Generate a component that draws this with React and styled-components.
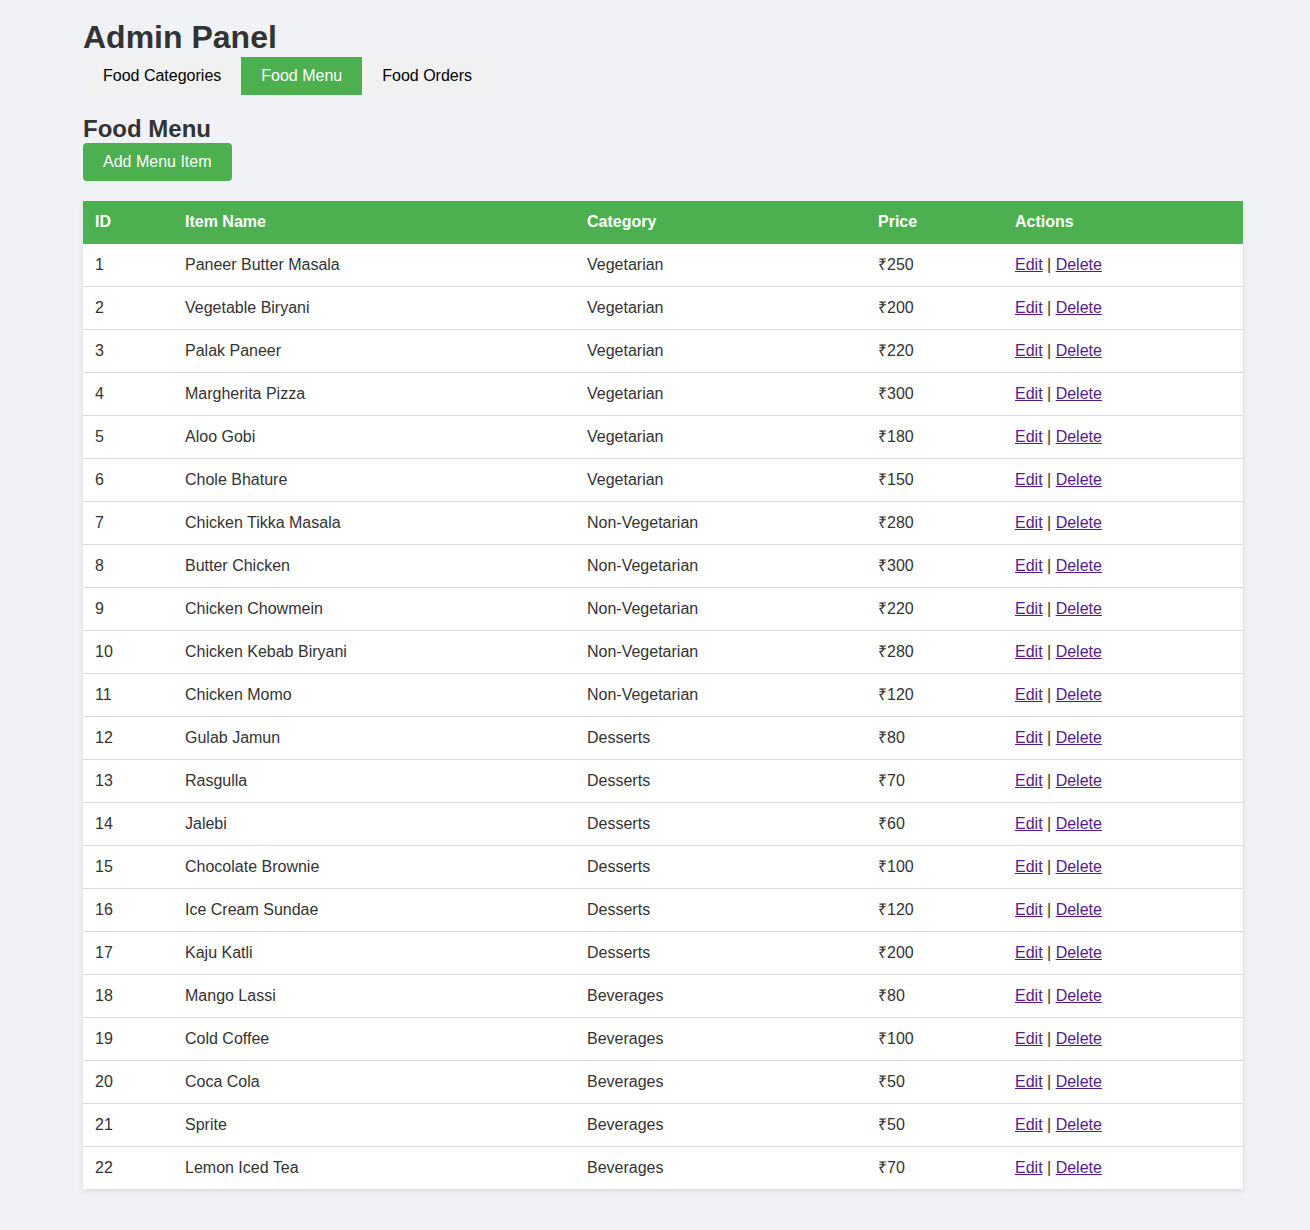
import React, { useState } from 'react'
import styled, { createGlobalStyle } from 'styled-components'

const GlobalStyle = createGlobalStyle`
  body {
    margin: 0;
    padding: 0 0 0 16px;
    background: #f0f2f5;
    font-family: "Liberation Sans", Arial, sans-serif;
    color: #333;
  }
`

const Page = styled.div`
  max-width: 1160px;
  margin: 0 auto;
  padding: 19px 0 40px;
`

const Title = styled.h1`
  margin: 0 0 1px;
  font-size: 32px;
  line-height: 37px;
  font-weight: 700;
  color: #333;
`

const Tabs = styled.nav`
  display: inline-flex;
  background: #f1f1f1;
`

const Tab = styled.button`
  border: none;
  margin: 0;
  padding: 10px 20px;
  font-family: inherit;
  font-size: 16px;
  line-height: 18px;
  cursor: pointer;
  background: ${p => (p.$active ? '#4caf50' : 'transparent')};
  color: ${p => (p.$active ? '#fff' : '#000')};
`

const SectionTitle = styled.h2`
  margin: 20px 0 1px;
  font-size: 24px;
  line-height: 27px;
  font-weight: 700;
  color: #333;
`

const AddButton = styled.button`
  border: none;
  border-radius: 4px;
  padding: 10px 20px;
  background: #4caf50;
  color: #fff;
  font-family: inherit;
  font-size: 16px;
  line-height: 18px;
  cursor: pointer;
`

const Table = styled.table`
  width: 100%;
  margin-top: 20px;
  border-collapse: collapse;
  table-layout: fixed;
  background: #fff;
  box-shadow: 0 2px 5px rgba(0, 0, 0, 0.1);
  font-size: 16px;
  line-height: 18px;
`

const Th = styled.th`
  background: #4caf50;
  color: #fff;
  text-align: left;
  font-weight: 700;
  padding: 12px 12px 13px;
`

const Row = styled.tr`
  &:not(:last-child) td {
    border-bottom: 1px solid #ddd;
  }
`

const Td = styled.td`
  padding: 12px;
  color: #333;
`

const ActionLink = styled.a`
  color: #551a8b;
  text-decoration: underline;
  cursor: pointer;
`

const items = [
  ['Paneer Butter Masala', 'Vegetarian', 250],
  ['Vegetable Biryani', 'Vegetarian', 200],
  ['Palak Paneer', 'Vegetarian', 220],
  ['Margherita Pizza', 'Vegetarian', 300],
  ['Aloo Gobi', 'Vegetarian', 180],
  ['Chole Bhature', 'Vegetarian', 150],
  ['Chicken Tikka Masala', 'Non-Vegetarian', 280],
  ['Butter Chicken', 'Non-Vegetarian', 300],
  ['Chicken Chowmein', 'Non-Vegetarian', 220],
  ['Chicken Kebab Biryani', 'Non-Vegetarian', 280],
  ['Chicken Momo', 'Non-Vegetarian', 120],
  ['Gulab Jamun', 'Desserts', 80],
  ['Rasgulla', 'Desserts', 70],
  ['Jalebi', 'Desserts', 60],
  ['Chocolate Brownie', 'Desserts', 100],
  ['Ice Cream Sundae', 'Desserts', 120],
  ['Kaju Katli', 'Desserts', 200],
  ['Mango Lassi', 'Beverages', 80],
  ['Cold Coffee', 'Beverages', 100],
  ['Coca Cola', 'Beverages', 50],
  ['Sprite', 'Beverages', 50],
  ['Lemon Iced Tea', 'Beverages', 70],
]

const tabs = ['Food Categories', 'Food Menu', 'Food Orders']
const columns = [['ID', 90], ['Item Name', 402], ['Category', 291], ['Price', 137], ['Actions', 240]]

export default function App() {
  const [active, setActive] = useState('Food Menu')

  return (
    <Page>
      <GlobalStyle />
      <Title>Admin Panel</Title>
      <Tabs>
        {tabs.map(t => (
          <Tab key={t} $active={t === active} onClick={() => setActive(t)}>{t}</Tab>
        ))}
      </Tabs>

      <SectionTitle>Food Menu</SectionTitle>
      <AddButton>Add Menu Item</AddButton>

      <Table>
        <colgroup>
          {columns.map(([label, w]) => <col key={label} width={w} />)}
        </colgroup>
        <thead>
          <tr>
            {columns.map(([label]) => <Th key={label}>{label}</Th>)}
          </tr>
        </thead>
        <tbody>
          {items.map(([name, cat, price], i) => (
            <Row key={name}>
              <Td>{i + 1}</Td>
              <Td>{name}</Td>
              <Td>{cat}</Td>
              <Td>₹{price}</Td>
              <Td>
                <ActionLink href="#">Edit</ActionLink> | <ActionLink href="#">Delete</ActionLink>
              </Td>
            </Row>
          ))}
        </tbody>
      </Table>
    </Page>
  )
}
